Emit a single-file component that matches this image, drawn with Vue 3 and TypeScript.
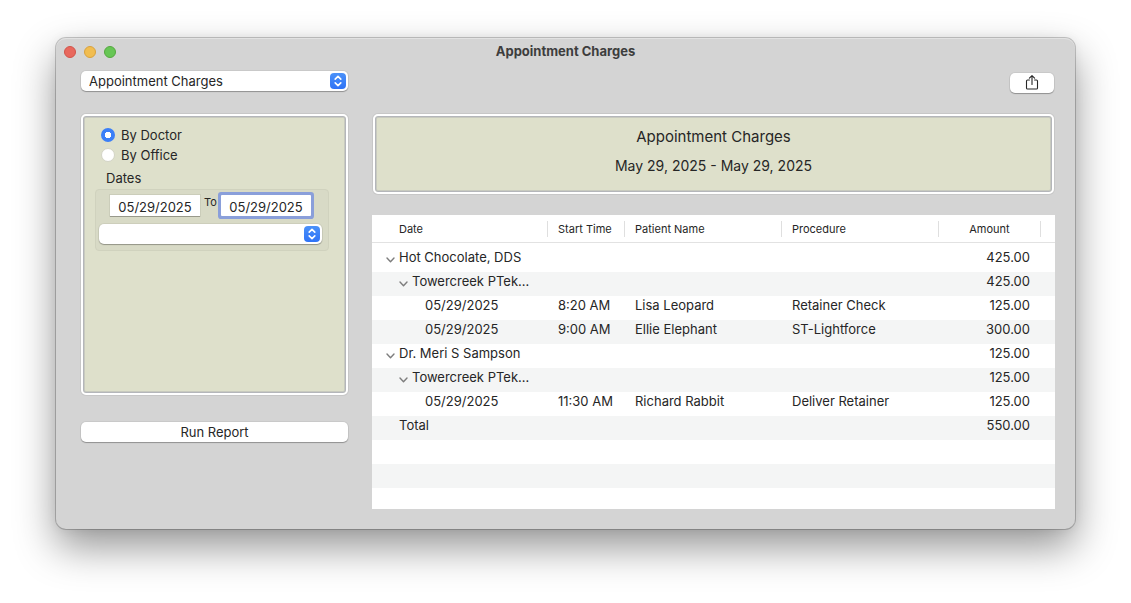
<script setup lang="ts">
import { ref } from 'vue'

interface ReportRow {
  level: number
  label: string
  expandable?: boolean
  start?: string
  patient?: string
  procedure?: string
  amount: string
}

const report = ref('Appointment Charges')
const groupBy = ref('doctor')
const fromDate = ref('05/29/2025')
const toDate = ref('05/29/2025')
const filter = ref('')

const rows: ReportRow[] = [
  { level: 0, label: 'Hot Chocolate, DDS', expandable: true, amount: '425.00' },
  { level: 1, label: 'Towercreek PTek…', expandable: true, amount: '425.00' },
  { level: 2, label: '05/29/2025', start: '8:20 AM', patient: 'Lisa Leopard', procedure: 'Retainer Check', amount: '125.00' },
  { level: 2, label: '05/29/2025', start: '9:00 AM', patient: 'Ellie Elephant', procedure: 'ST-Lightforce', amount: '300.00' },
  { level: 0, label: 'Dr. Meri S Sampson', expandable: true, amount: '125.00' },
  { level: 1, label: 'Towercreek PTek…', expandable: true, amount: '125.00' },
  { level: 2, label: '05/29/2025', start: '11:30 AM', patient: 'Richard Rabbit', procedure: 'Deliver Retainer', amount: '125.00' },
  { level: 0, label: 'Total', amount: '550.00' },
]
</script>

<template>
  <div class="desktop">
    <main class="window">
      <header class="titlebar">
        <div class="lights">
          <button type="button" class="light red" aria-label="Close"></button>
          <button type="button" class="light yellow" aria-label="Minimize"></button>
          <button type="button" class="light green" aria-label="Zoom"></button>
        </div>
        <h1>Appointment Charges</h1>
      </header>

      <div class="body">
        <section class="side">
          <div class="popup">
            <select v-model="report" aria-label="Report">
              <option>Appointment Charges</option>
            </select>
            <span class="stepper">
              <svg viewBox="0 0 16 16" width="16" height="16">
                <path d="M5.2 6.1 8 3.4l2.8 2.7M5.2 9.9 8 12.6l2.8-2.7" />
              </svg>
            </span>
          </div>

          <div class="frame options">
            <label class="radio">
              <input v-model="groupBy" type="radio" name="group" value="doctor" />By Doctor
            </label>
            <label class="radio">
              <input v-model="groupBy" type="radio" name="group" value="office" />By Office
            </label>
            <fieldset>
              <legend>Dates</legend>
              <div class="group">
                <div class="range">
                  <input v-model="fromDate" type="text" class="date" aria-label="From date" />
                  <span class="to">To</span>
                  <input v-model="toDate" type="text" class="date active" aria-label="To date" />
                </div>
                <div class="popup">
                  <select v-model="filter" aria-label="Date preset">
                    <option value=""></option>
                  </select>
                  <span class="stepper">
                    <svg viewBox="0 0 16 16" width="16" height="16">
                      <path d="M5.2 6.1 8 3.4l2.8 2.7M5.2 9.9 8 12.6l2.8-2.7" />
                    </svg>
                  </span>
                </div>
              </div>
            </fieldset>
          </div>

          <button type="button" class="push">Run Report</button>
        </section>

        <section class="content">
          <button type="button" class="push share" aria-label="Share">
            <svg viewBox="0 0 14 16" width="14" height="16">
              <path d="M4.4 5H2.6Q1.5 5 1.5 6.1v6.8q0 1.1 1.1 1.1h8.8q1.1 0 1.1-1.1V6.1q0-1.1-1.1-1.1H9.6M7 9.5V.8M4.4 3.2 7 .6l2.6 2.6" />
            </svg>
          </button>

          <div class="frame summary">
            <h2>Appointment Charges</h2>
            <p>May 29, 2025 - May 29, 2025</p>
          </div>

          <div class="sheet">
            <table>
              <colgroup>
                <col class="c-date" />
                <col class="c-start" />
                <col />
                <col />
                <col class="c-amount" />
                <col class="c-tail" />
              </colgroup>
              <thead>
                <tr>
                  <th class="first"><span>Date</span></th>
                  <th><span>Start Time</span></th>
                  <th><span>Patient Name</span></th>
                  <th><span>Procedure</span></th>
                  <th class="center"><span>Amount</span></th>
                  <td class="tail"></td>
                </tr>
              </thead>
              <tbody>
                <tr v-for="(row, i) in rows" :key="i">
                  <td class="first">
                    <div class="node" :class="'level-' + row.level">
                      <svg v-if="row.expandable" class="chevron" viewBox="0 0 9 6" width="9" height="6">
                        <path d="M1 1l3.5 3.7L8 1" />
                      </svg>
                      <span v-else class="chevron"></span>
                      {{ row.label }}
                    </div>
                  </td>
                  <td>{{ row.start }}</td>
                  <td>{{ row.patient }}</td>
                  <td>{{ row.procedure }}</td>
                  <td class="amount">{{ row.amount }}</td>
                  <td></td>
                </tr>
              </tbody>
            </table>
            <div class="blank"></div>
          </div>
        </section>
      </div>
    </main>
  </div>
</template>

<style>
body {
  margin: 0;
  background: #fff;
}
</style>

<style scoped>
* {
  box-sizing: border-box;
}

.desktop {
  display: flex;
  min-height: 100vh;
  padding: 38px 56px 74px;
  overflow: hidden;
  color: #262626;
  font-family: Inter, "Liberation Sans", sans-serif;
  font-size: 13px;
  line-height: 16px;
}

.window {
  display: flex;
  flex: 1;
  flex-direction: column;
  min-width: 0;
  border-radius: 10px;
  background: #d4d4d4;
  box-shadow:
    inset 0 1px 0 #e2e2e2,
    0 0 0 1px rgba(0, 0, 0, 0.2),
    0 18px 40px rgba(0, 0, 0, 0.42),
    0 0 12px rgba(0, 0, 0, 0.06);
}

.titlebar {
  display: grid;
  grid-template-columns: 1fr auto 1fr;
  align-items: center;
  height: 28px;
  padding: 0 8px;
}

.lights {
  display: flex;
  gap: 8px;
}

.light {
  width: 12px;
  height: 12px;
  padding: 0;
  border: 1px solid;
  border-radius: 50%;
}

.red {
  border-color: #d2544a;
  background: #e8685d;
}

.yellow {
  border-color: #d9a23d;
  background: #f1bd50;
}

.green {
  border-color: #55a83f;
  background: #67c655;
}

h1 {
  margin: 0;
  padding-bottom: 2px;
  color: #3d3d3d;
  font-size: 13px;
  font-weight: 700;
}

.body {
  display: flex;
  flex: 1;
  gap: 24px;
  padding: 5px 20px 20px 25px;
}

.side {
  width: 267px;
}

.content {
  display: flex;
  flex: 1;
  flex-direction: column;
  min-width: 0;
  padding-top: 2px;
}

input,
select,
button {
  margin: 0;
  color: inherit;
  font: inherit;
}

.popup {
  position: relative;
}

.popup select {
  display: block;
  width: 100%;
  height: 20px;
  padding: 0 24px 1px 8px;
  border: 0;
  border-radius: 5px;
  appearance: none;
  background: #fff;
  box-shadow: 0 0 0 1px rgba(0, 0, 0, 0.05), 0 1px 1px rgba(0, 0, 0, 0.28);
}

.stepper {
  position: absolute;
  top: 2px;
  right: 2px;
  width: 16px;
  height: 16px;
  border-radius: 4px;
  background: linear-gradient(#4a91f9, #2f73f6);
  pointer-events: none;
}

svg {
  display: block;
  fill: none;
  stroke: currentColor;
  stroke-linecap: round;
  stroke-linejoin: round;
}

.stepper svg {
  color: #fff;
  stroke-width: 1.6;
}

.frame {
  border: 2px solid #fff;
  border-radius: 5px;
  background: #dee0cb;
  box-shadow: 0 0 0 1px rgba(0, 0, 0, 0.06), inset 0 0 0 1px #b4b6ba, inset 0 0 0 2px #c8cabf;
}

.options {
  min-height: 281px;
  margin: 23px 0 27px;
  padding: 9px 17px 0 12px;
}

.radio {
  display: flex;
  align-items: center;
  gap: 6px;
  height: 20px;
  padding-left: 6px;
}

.radio input {
  width: 14px;
  height: 14px;
  border: 1px solid #d3d4c6;
  border-radius: 50%;
  appearance: none;
  background: #fff;
}

.radio input:checked {
  border: 0;
  background: radial-gradient(circle, #fff 2px, #3b7ff7 4px);
  background: radial-gradient(circle, #fff 0 3px, #3b7ff7 3px);
}

fieldset {
  min-width: 0;
  margin: 0;
  padding: 0;
  border: 0;
}

legend {
  padding: 5px 11px 3px;
}

.group {
  padding: 5px 6px 6px 3px;
  border: 1px solid #d0d2be;
  border-radius: 4px;
  background: #d8dac6;
}

.range {
  display: flex;
  justify-content: space-between;
  margin-bottom: 8px;
  padding: 0 11px;
}

.date {
  width: 90px;
  height: 21px;
  padding: 2px 0 0;
  border: 0;
  outline: 0;
  background: #fff;
  box-shadow: 0 0 0 1px rgba(0, 0, 0, 0.06), 0 1px 0 rgba(0, 0, 0, 0.25);
  text-align: center;
}

.date.active {
  border-radius: 1px;
  box-shadow: 0 0 0 3px #8a9fda;
}

.to {
  font-size: 11px;
  line-height: 14px;
}

.push {
  display: block;
  width: 100%;
  height: 20px;
  padding: 0 0 1px;
  border: 0;
  border-radius: 5px;
  background: #fff;
  box-shadow: 0 0 0 1px rgba(0, 0, 0, 0.05), 0 1px 1px rgba(0, 0, 0, 0.28);
}

.share {
  display: grid;
  place-items: center;
  align-self: flex-end;
  width: 44px;
  margin-right: 1px;
  padding: 0;
}

.share svg {
  stroke-width: 1.1;
}

.summary {
  min-height: 80px;
  margin: 21px 1px;
  padding: 11px;
  text-align: center;
}

h2 {
  margin: 0 0 10px;
  font-size: 15px;
  font-weight: 400;
  line-height: 20px;
}

p {
  margin: 0;
  font-size: 14px;
  line-height: 18px;
}

.sheet {
  display: flex;
  flex: 1;
  flex-direction: column;
  background: #fff;
}

table {
  width: 100%;
  border-collapse: separate;
  border-spacing: 0;
  table-layout: fixed;
}

.c-date {
  width: 176px;
}

.c-start {
  width: 77px;
}

.c-amount {
  width: 102px;
}

.c-tail {
  width: 14px;
}

th,
td {
  padding: 0 10px;
  text-align: left;
  white-space: nowrap;
}

thead th,
.tail {
  height: 28px;
  padding: 0;
  border-bottom: 1px solid #e2e2e2;
  font-size: 11px;
  font-weight: 400;
}

th span {
  display: block;
  padding-left: 10px;
  border-right: 1px solid #dfdfdf;
}

th.first span {
  padding-left: 27px;
}

th.center span {
  padding: 0;
  text-align: center;
}

tbody::before {
  display: block;
  height: 5px;
  content: "";
}

tbody td {
  height: 24px;
  padding-bottom: 6px;
}

tbody tr:nth-child(even) {
  background: #f4f5f5;
}

td.first {
  padding-left: 14px;
  padding-right: 0;
}

.node {
  display: flex;
  align-items: center;
}

.level-1 {
  padding-left: 13px;
}

.level-2 {
  padding-left: 26px;
}

.chevron {
  width: 9px;
  margin: 6px 4px 0 0;
  color: #7d7d7d;
  stroke-width: 1.4;
}

td.amount {
  padding-right: 11px;
  text-align: right;
}

.blank {
  flex: 1;
  background: repeating-linear-gradient(#fff 0 24px, #f4f5f5 24px 48px);
}
</style>
